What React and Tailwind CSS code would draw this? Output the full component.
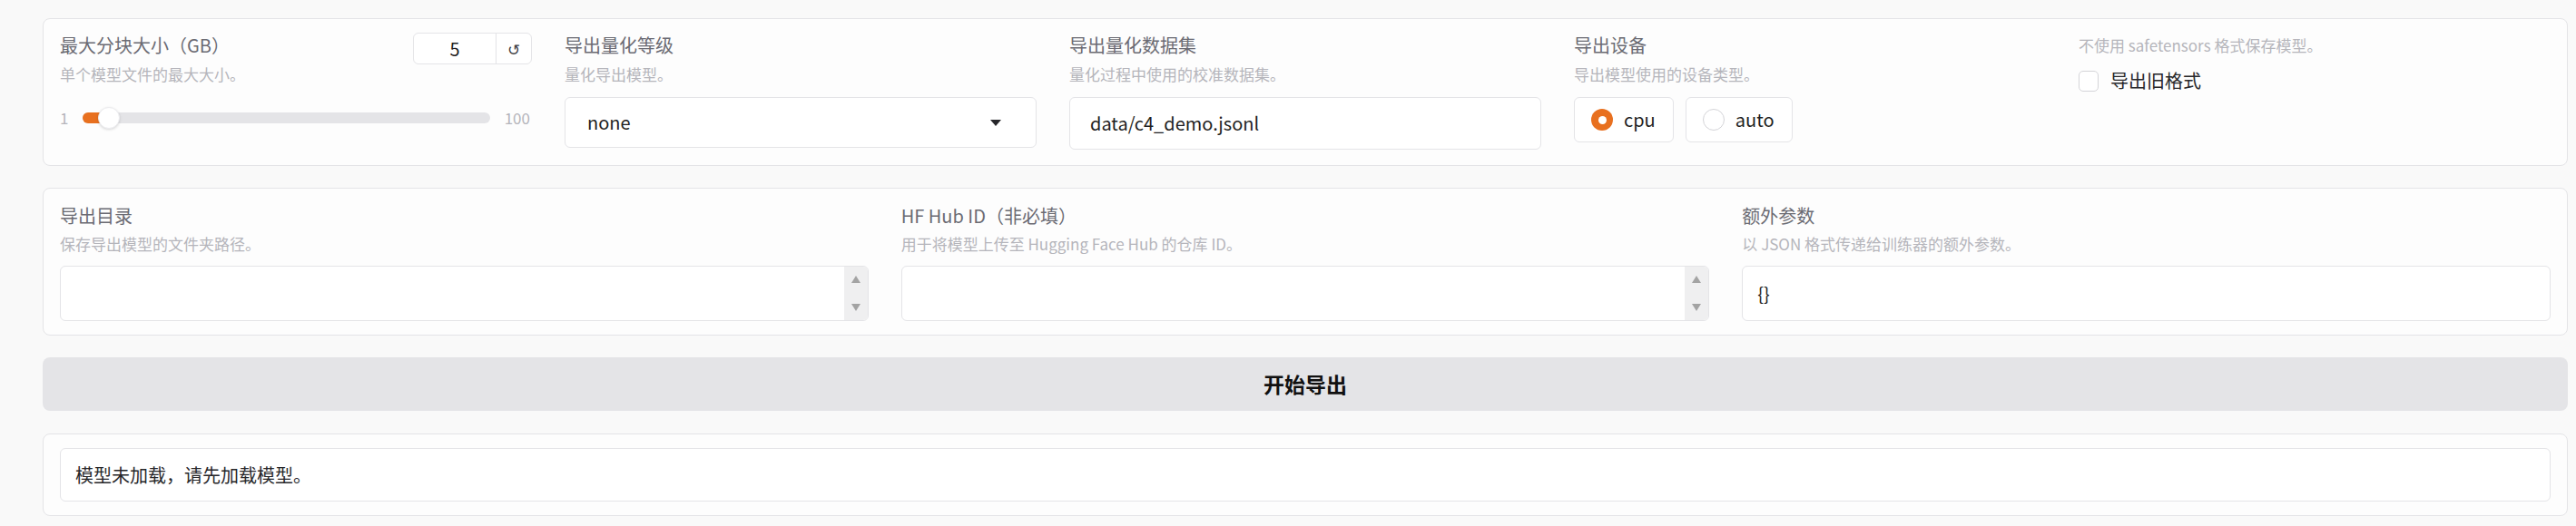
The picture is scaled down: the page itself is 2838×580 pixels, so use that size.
const font = "font-['Noto_Sans_CJK_SC','Noto_Sans',sans-serif]";

const Label = ({ children }) => (
  <div className="text-[20px] leading-[28px] text-[#6b6b73]">{children}</div>
);

const Info = ({ children, className = "" }) => (
  <div className={`text-[17px] leading-[24px] text-[#b5b5bb] ${className}`}>{children}</div>
);

const Radio = ({ label, checked }) => (
  <div className="flex h-[50px] items-center gap-[12px] rounded-md border border-[#e4e4e7] bg-white pl-[18px] pr-[19px]">
    {checked ? (
      <span className="flex h-[24px] w-[24px] items-center justify-center rounded-full bg-[#e8701f]">
        <span className="h-[9px] w-[9px] rounded-full bg-white"></span>
      </span>
    ) : (
      <span className="h-[24px] w-[24px] rounded-full border border-[#d4d4d8] bg-white"></span>
    )}
    <span className="text-[20px] text-[#1f1f23]">{label}</span>
  </div>
);

const TextArea = ({ value, scroll }) => (
  <div className="mt-[12px] flex h-[61px] overflow-hidden rounded-md border border-[#e4e4e7] bg-white">
    <div className="flex flex-1 items-center pl-[16px] text-[20px] text-[#1f1f23]">{value}</div>
    {scroll && (
      <div className="flex w-[26px] flex-col items-center justify-between bg-[#efeff0] py-[10px]">
        <svg width="10" height="8" viewBox="0 0 10 8"><path d="M5 0L10 8H0z" fill="#a3a3a3" /></svg>
        <svg width="10" height="8" viewBox="0 0 10 8"><path d="M0 0H10L5 8z" fill="#a3a3a3" /></svg>
      </div>
    )}
  </div>
);

export default function App() {
  return (
    <div className={`${font} min-h-[580px] bg-[#f9f9f9] pb-[11px] pl-[47px] pr-[9px] pt-[20px]`}>
      {/* settings row */}
      <div className="grid grid-cols-5 gap-x-[36px] rounded-lg border border-[#e4e4e7] bg-[#fdfdfd] px-[18px] pb-[17px] pt-[15px]">
        <div>
          <div className="flex items-start justify-between">
            <div>
              <Label>最大分块大小（GB）</Label>
              <Info className="mt-[6px]">单个模型文件的最大大小。</Info>
            </div>
            <div className="flex h-[35px] w-[131px] items-stretch overflow-hidden rounded-md border border-[#e4e4e7] bg-white">
              <div className="flex flex-1 items-center justify-center text-[20px] text-[#1f1f23]">5</div>
              <div className="flex w-[39px] items-center justify-center border-l border-[#e4e4e7] text-[17px] text-[#3f3f46]">↺</div>
            </div>
          </div>
          <div className="mt-[24px] flex h-[24px] items-center gap-[16px] text-[17px] text-[#b5b5bb]">
            <span>1</span>
            <div className="relative h-[12px] flex-1 rounded-full bg-[#e4e4e7]">
              <div className="h-[12px] w-[26px] rounded-full bg-[#e8701f]"></div>
              <div className="absolute left-[17px] top-[-6px] h-[24px] w-[24px] rounded-full border border-[#ececef] bg-white shadow-[0_1px_3px_rgba(0,0,0,0.15)]"></div>
            </div>
            <span className="pr-[2px]">100</span>
          </div>
        </div>

        <div>
          <Label>导出量化等级</Label>
          <Info className="mt-[6px]">量化导出模型。</Info>
          <div className="mt-[13px] flex h-[56px] items-center justify-between rounded-md border border-[#e4e4e7] bg-white pl-[24px] pr-[38px]">
            <span className="text-[20px] text-[#1f1f23]">none</span>
            <svg width="12" height="7" viewBox="0 0 12 7"><path d="M0 0H12L6 7z" fill="#27272a" /></svg>
          </div>
        </div>

        <div>
          <Label>导出量化数据集</Label>
          <Info className="mt-[6px]">量化过程中使用的校准数据集。</Info>
          <div className="mt-[13px] flex h-[58px] items-center rounded-md border border-[#e4e4e7] bg-white pl-[22px] text-[20px] text-[#1f1f23]">
            data/c4_demo.jsonl
          </div>
        </div>

        <div>
          <Label>导出设备</Label>
          <Info className="mt-[6px]">导出模型使用的设备类型。</Info>
          <div className="mt-[13px] flex gap-[13px]">
            <Radio label="cpu" checked />
            <Radio label="auto" />
          </div>
        </div>

        <div>
          <div className="text-[17px] leading-[28px] text-[#b5b5bb]">不使用 safetensors 格式保存模型。</div>
          <div className="mt-[11px] flex h-[28px] items-center gap-[13px]">
            <span className="h-[23px] w-[22px] rounded-[5px] border border-[#d4d4d8] bg-white"></span>
            <span className="text-[20px] text-[#27272a]">导出旧格式</span>
          </div>
        </div>
      </div>

      {/* paths row */}
      <div className="mt-[24px] grid grid-cols-3 gap-x-[36px] rounded-lg border border-[#e4e4e7] bg-[#fdfdfd] px-[18px] pb-[15px] pt-[16px]">
        <div>
          <Label>导出目录</Label>
          <Info className="mt-[5px]">保存导出模型的文件夹路径。</Info>
          <TextArea scroll />
        </div>
        <div>
          <Label>HF Hub ID（非必填）</Label>
          <Info className="mt-[5px]">用于将模型上传至 Hugging Face Hub 的仓库 ID。</Info>
          <TextArea scroll />
        </div>
        <div>
          <Label>额外参数</Label>
          <Info className="mt-[5px]">以 JSON 格式传递给训练器的额外参数。</Info>
          <TextArea value="{}" />
        </div>
      </div>

      <button className="mt-[24px] flex h-[59px] w-full items-center justify-center rounded-lg bg-[#e4e4e7] text-[23px] font-bold text-[#111]">
        开始导出
      </button>

      <div className="mt-[25px] rounded-lg border border-[#e4e4e7] bg-[#fdfdfd] px-[18px] py-[15px]">
        <div className="flex h-[59px] items-center rounded-md border border-[#e4e4e7] bg-white pl-[16px] text-[20px] text-[#27272a]">
          模型未加载，请先加载模型。
        </div>
      </div>
    </div>
  );
}
